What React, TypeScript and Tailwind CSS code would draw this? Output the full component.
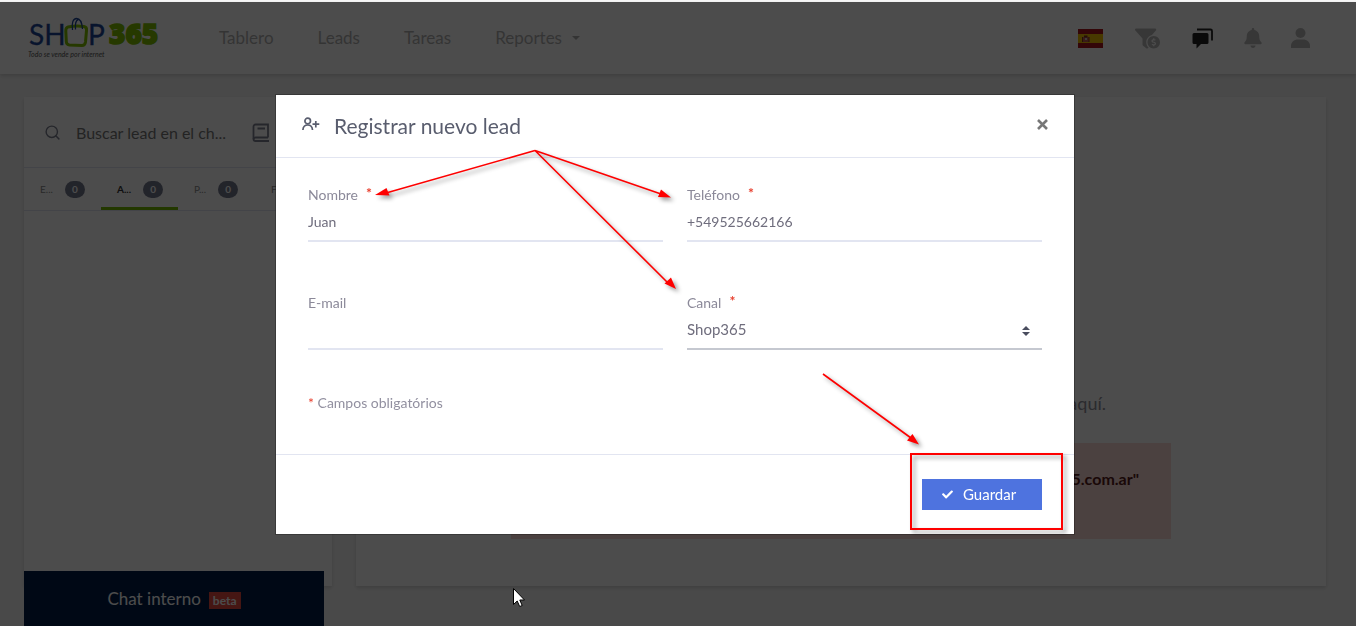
import { useState } from "react";
import { FaBell, FaCheck, FaFunnelDollar } from "react-icons/fa";
import { FiSearch } from "react-icons/fi";

const navLinks = ["Tablero", "Leads", "Tareas"];

const tabs = [
  { id: "e", label: "E...", count: 0 },
  { id: "a", label: "A...", count: 0 },
  { id: "p", label: "P...", count: 0 },
  { id: "f", label: "F...", count: 0 },
];

const Logo = () => (
  <svg width="138" height="44" viewBox="0 0 138 44" aria-label="Shop 365">
    <g fill="#1b4596" stroke="#1b4596" strokeWidth=".3" fontFamily="Lato, sans-serif" fontSize="28">
      <text x="1" y="29">
        SH
      </text>
      <text x="60" y="29">
        P
      </text>
    </g>
    <path
      d="M40 11q8-1.500 16-.5 3 .5 2.500 4l-1 11.500q-.5 3.500-3.500 3.500l-12.500-.5q-3-.2-3.200-3.500l-.5-10.500q0-3.500 2.200-4z"
      fill="none"
      stroke="#80c000"
      strokeWidth="3"
    />
    <path
      d="M44.500 14c-1-7 .5-11.500 4-11.500s5.500 4 6 10.500M47.500 13.500c-.5-6 .5-9.500 3-10"
      fill="none"
      stroke="#1b4596"
      strokeWidth="1.300"
    />
    <text
      x="81"
      y="28"
      fill="#80c000"
      stroke="#80c000"
      strokeWidth="1.500"
      fontFamily="'Open Sans', sans-serif"
      fontWeight="800"
      fontSize="28"
    >
      365
    </text>
    <text
      x="0"
      y="41"
      fill="#555"
      fontFamily="Lato, sans-serif"
      fontStyle="italic"
      fontSize="7"
    >
      Todo se vende por internet
    </text>
  </svg>
);

const SpainFlag = () => (
  <svg width="25" height="19" viewBox="0 0 25 19">
    <path fill="#aa151b" d="M0 0h25v19H0z" />
    <path fill="#f1bf00" d="M0 5h25v9H0z" />
    <path fill="#c06050" d="M5 8h6v5H5z" />
    <path fill="#7a3020" d="M6 6.500h3.500v2H6zM4 8h1v5H4zM10.500 8h1v5h-1z" />
    <path fill="#d8c8c0" d="M7 9h2v2H7z" />
  </svg>
);

const ChatIcon = () => (
  <svg width="21" height="21" viewBox="0 0 21 21" fill="#222">
    <path d="M2 5h13a1.500 1.500 0 0 1 1.500 1.500v8A1.500 1.500 0 0 1 15 16H9l-4.500 4.500V16H2a1.500 1.500 0 0 1-1.500-1.500v-8A1.500 1.500 0 0 1 2 5z" />
    <path d="M5 1.500h13.500a1.500 1.500 0 0 1 1.500 1.500v9.500" fill="none" stroke="#222" strokeWidth="1.800" />
  </svg>
);

const UserIcon = () => (
  <svg width="19" height="20" viewBox="0 0 19 20" fill="currentColor">
    <circle cx="9.500" cy="5" r="5" />
    <path d="M0 20v-2c0-4 3-6.500 7-6.500h5c4 0 7 2.500 7 6.500v2z" />
  </svg>
);

const BookIcon = () => (
  <svg width="18" height="19" viewBox="0 0 18 19" fill="none" stroke="currentColor" strokeWidth="1.800">
    <path d="M16 14.500V1.500H3.500a2 2 0 0 0-2 2v12.500a2 2 0 0 0 2 2H17" />
    <path d="M16 14.500H3.500a2 2 0 0 0-2 1.700M5.500 5.500h7.500" />
  </svg>
);

const UserPlusIcon = () => (
  <svg width="18" height="14" viewBox="0 0 18 14" fill="none" stroke="currentColor" strokeWidth="1.700">
    <circle cx="5.700" cy="4" r="2.800" />
    <path d="M.9 13c.2-3.200 2-5 4.800-5s4.600 1.800 4.800 5M13.800 4v6.500M10.500 7.200h6.800" />
  </svg>
);

const Required = () => <span className="ml-2 font-bold text-[#e8402f] relative -top-0.5">*</span>;

interface FieldProps {
  id: string;
  label: string;
  value: string;
  required?: boolean;
  onChange: (value: string) => void;
}

const Field: React.FC<FieldProps> = ({ id, label, value, required, onChange }) => (
  <div>
    <label htmlFor={id} className="block text-sm leading-[18px] text-[#8b8999]">
      {label}
      {required && <Required />}
    </label>
    <input
      id={id}
      value={value}
      onChange={(e) => onChange(e.target.value)}
      className="block w-full h-[38px] pb-0.5 border-b-2 border-[#e2e5f1] text-sm text-[#6f6d7d] outline-none"
    />
  </div>
);

// Tutorial marks drawn over the dialog
const Annotations = () => (
  <svg
    className="absolute left-0 top-0 pointer-events-none overflow-visible drop-shadow-[3px_3px_2px_rgba(0,0,0,0.4)]"
    width="798"
    height="439"
    viewBox="0 0 798 439"
    fill="none"
    stroke="#fe0000"
    strokeWidth="1.600"
  >
    <path d="M259 55.500L110 98M259 55.500L385 99M259 55.500L392 188M547 279L635 343" />
    <g fill="#fe0000" stroke="none">
      <path d="M99 100l11.500-7 3 7.500z" />
      <path d="M395 102.500l-10-8-3 7.500z" />
      <path d="M400 194l-5-11.500-6.500 6z" />
      <path d="M643 349.500l-6.500-10.500-5.500 6.500z" />
    </g>
    <rect x="635" y="359" width="151" height="75" strokeWidth="2" />
  </svg>
);

const RegisterLeadDialog = () => {
  const [lead, setLead] = useState({
    nombre: "Juan",
    telefono: "+549525662166",
    email: "",
    canal: "Shop365",
  });

  const update = (key: string) => (value: string) => setLead({ ...lead, [key]: value });

  return (
    <div
      role="dialog"
      aria-labelledby="dialog-title"
      className="relative w-full max-w-[798px] bg-white shadow-[0_0_0_1px_rgba(0,0,0,0.25)]"
    >
      <div className="flex items-center h-[63px] px-[26px] pb-1 border-b border-[#e2e5f1] text-[#595d6e]">
        <UserPlusIcon />
        <h2 id="dialog-title" className="ml-3.5 pt-1 text-[21px]">
          Registrar nuevo lead
        </h2>
        <button aria-label="Cerrar" className="ml-auto text-[#777]">
          <svg width="11" height="11" viewBox="0 0 11 11" stroke="currentColor" strokeWidth="2.600">
            <path d="M1 1l9 9M10 1l-9 9" />
          </svg>
        </button>
      </div>

      <form onSubmit={(e) => e.preventDefault()}>
        <div className="px-8 pt-7 pb-[42px]">
          <div className="grid grid-cols-2 gap-x-6 gap-y-[52px]">
            <Field id="nombre" label="Nombre" required value={lead.nombre} onChange={update("nombre")} />
            <Field id="telefono" label="Teléfono" required value={lead.telefono} onChange={update("telefono")} />
            <Field id="email" label="E-mail" value={lead.email} onChange={update("email")} />
            <div>
              <label htmlFor="canal" className="block text-sm leading-[18px] text-[#8b8999]">
                Canal
                <Required />
              </label>
              <div className="relative">
                <select
                  id="canal"
                  value={lead.canal}
                  onChange={(e) => update("canal")(e.target.value)}
                  className="block w-full h-[38px] pb-0.5 appearance-none border-b-2 border-[#c5c8d0] text-[15px] text-[#6f6d7d] outline-none"
                >
                  <option>Shop365</option>
                </select>
                <svg className="absolute right-3 top-3.5 pointer-events-none" width="8" height="10" viewBox="0 0 8 10" fill="#4a4d5e">
                  <path d="M0 4l4-4 4 4zM0 6h8l-4 4z" />
                </svg>
              </div>
            </div>
          </div>
          <p className="mt-11 text-sm leading-[18px] text-[#9290a0]">
            <span className="text-[#e8402f]">*</span> Campos obligatórios
          </p>
        </div>

        <div className="flex justify-end px-8 py-6 border-t border-[#e2e5f1]">
          <button className="flex items-center gap-2.5 w-[120px] h-[31px] pl-5 bg-[#4e73df] text-[15px] text-white">
            <FaCheck size={11} />
            Guardar
          </button>
        </div>
      </form>

      <Annotations />
    </div>
  );
};

const Header = () => (
  <header className="flex items-center h-[72px] pl-7 pr-[46px] bg-white text-[#b9b9b9] shadow-[0_2px_4px_rgba(0,0,0,0.15)]">
    <Logo />
    <nav className="flex items-center gap-11 ml-[53px] text-[17px] text-[#b0b0b0]">
      {navLinks.map((link) => (
        <a key={link} href="#">
          {link}
        </a>
      ))}
      <a href="#" className="flex items-center gap-2.5">
        Reportes
        <span className="border-x-4 border-x-transparent border-t-4 border-t-current" />
      </a>
    </nav>
    <div className="flex items-center gap-7 ml-auto">
      <button aria-label="Español" className="mr-1">
        <SpainFlag />
      </button>
      <button aria-label="Embudo" className="mr-1">
        <FaFunnelDollar size={25} />
      </button>
      <button aria-label="Chat" className="mr-0.5">
        <ChatIcon />
      </button>
      <button aria-label="Notificaciones">
        <FaBell size={20} />
      </button>
      <button aria-label="Perfil">
        <UserIcon />
      </button>
    </div>
  </header>
);

const Sidebar = () => (
  <aside className="w-[308px] shrink-0 overflow-hidden bg-white shadow-[0_2px_4px_rgba(0,0,0,0.15)]">
    <div className="flex items-center h-[71px] pl-5 border-b border-[#e2e5f1] text-[#7d8090]">
      <FiSearch size={17} />
      <input
        aria-label="Buscar lead"
        placeholder="Buscar lead en el ch..."
        className="ml-[15px] pt-0.5 w-[162px] text-base outline-none placeholder:text-[#777]"
      />
      <button aria-label="Agenda" className="ml-3.5">
        <BookIcon />
      </button>
    </div>
    <div className="flex h-[43px] border-b border-[#e2e5f1]">
      {tabs.map((tab) => (
        <button
          key={tab.id}
          className={`flex items-center gap-3 w-[77px] shrink-0 pl-4 text-[10px] ${
            tab.id === "a" ? "border-b-[3px] pt-[3px] border-[#76bc00] font-bold text-[#333]" : "text-[#8a8a8a]"
          }`}
        >
          {tab.label}
          <span className="flex items-center justify-center w-5 h-[17px] rounded-full bg-[#74788d] font-bold text-white">
            {tab.count}
          </span>
        </button>
      ))}
    </div>
  </aside>
);

export default function App() {
  return (
    <div className="flex flex-col min-h-screen pt-0.5 bg-[#f6f6f6] font-['Lato',sans-serif]">
      <Header />
      <main className="flex flex-1 gap-6 pl-6 pr-[30px] pt-[23px] pb-10">
        <Sidebar />
        <section className="flex flex-col items-center flex-1 pt-[292px] bg-white shadow-[0_2px_4px_rgba(0,0,0,0.15)]">
          <p className="w-full max-w-[530px] text-right text-lg leading-7 text-[#8f8f9b]">aquí.</p>
          <div className="w-full max-w-[660px] h-24 mt-[26px] pt-6 pr-8 bg-[#fcd9d6] text-right text-base font-bold text-[#571b1b]">
            365.com.ar"
          </div>
        </section>
      </main>

      <button className="fixed bottom-0 left-6 flex items-center justify-center gap-2 w-[300px] h-[55px] bg-[#011d48] text-[17px] text-white">
        Chat interno
        <span className="px-1 mt-1 bg-[#e84a40] text-xs leading-[17px] font-bold">beta</span>
      </button>

      <div className="fixed inset-x-0 bottom-0 top-0.5 flex items-start justify-center pt-[93px] pr-1.5 bg-black/70">
        <RegisterLeadDialog />
      </div>

      <svg className="fixed left-[513px] top-[588px] pointer-events-none" width="12" height="19" viewBox="0 0 12 19">
        <path d="M.5.5v16l3.700-3.500 2.500 5.500 2.500-1-2.400-5.500h4.700z" fill="#fff" stroke="#000" />
      </svg>
    </div>
  );
}
